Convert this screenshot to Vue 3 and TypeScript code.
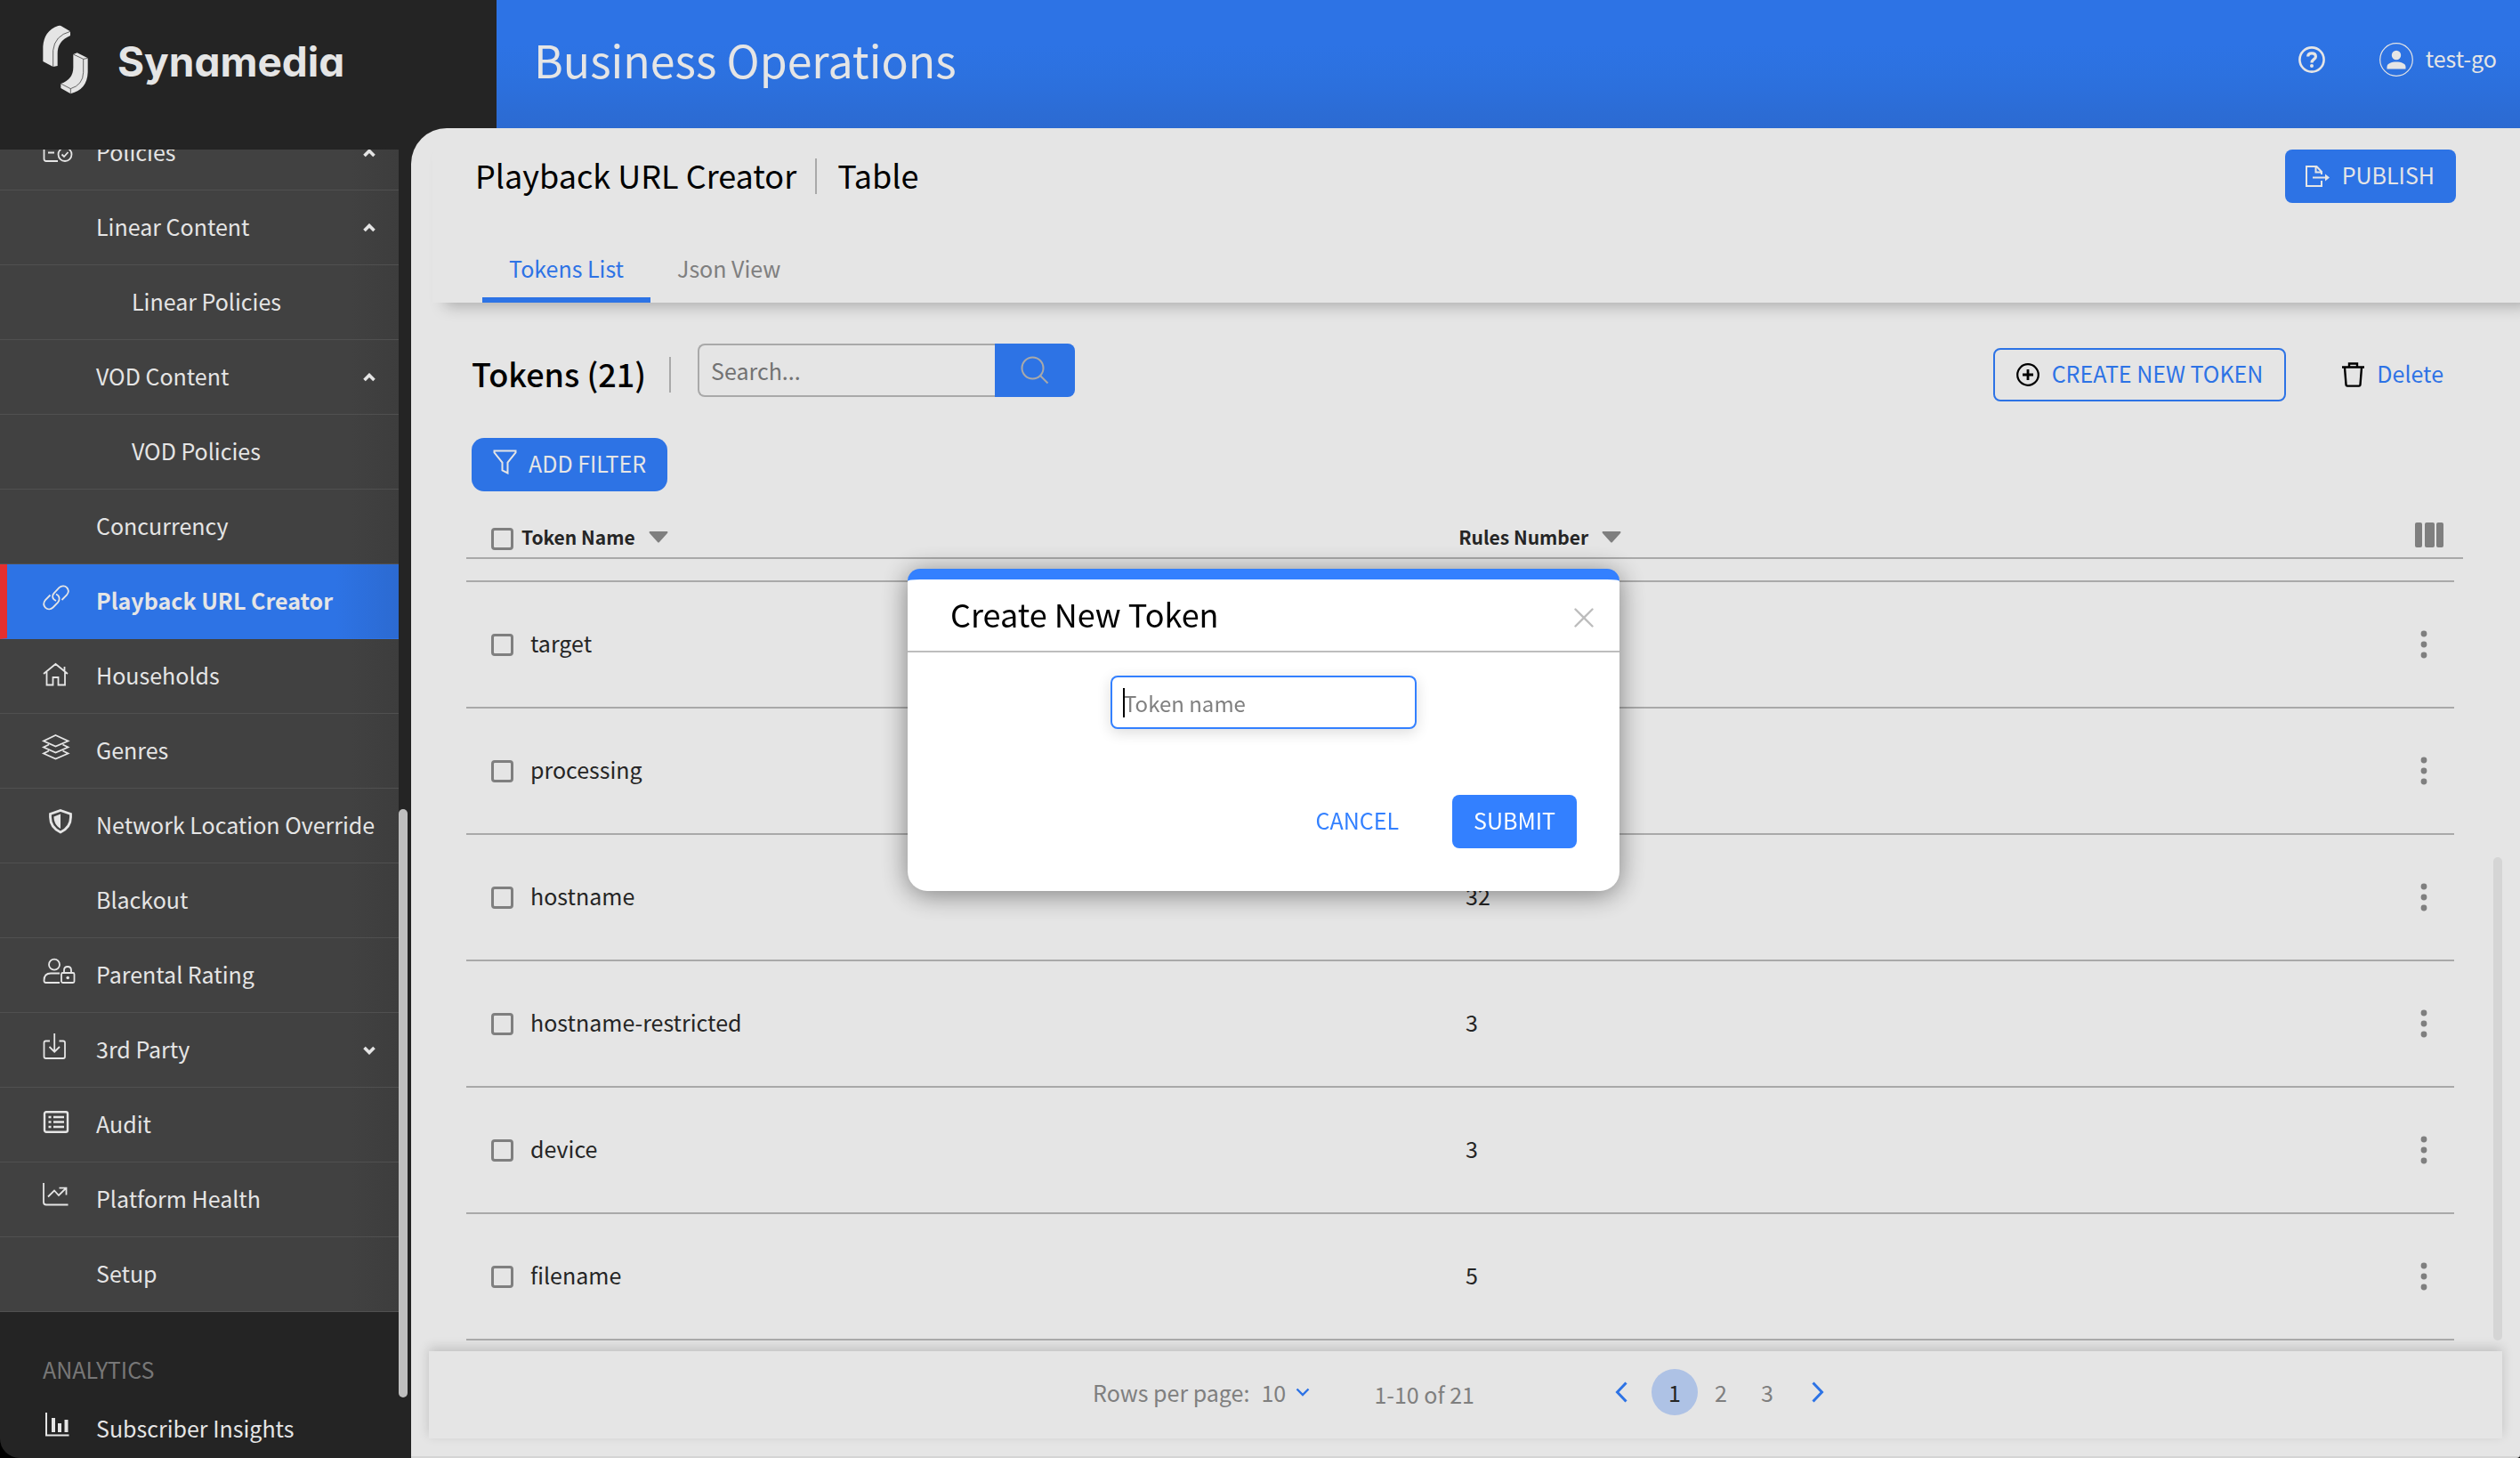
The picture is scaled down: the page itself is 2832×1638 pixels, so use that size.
<script setup lang="ts">
import { onMounted, ref } from 'vue'

interface NavItem {
  label: string
  icon?: string
  sub?: boolean
  chevron?: 'up' | 'down'
  active?: boolean
}

interface TokenRow {
  name: string
  rules: number
}

const navItems: NavItem[] = [
  { label: 'Policies', icon: 'policies', chevron: 'up' },
  { label: 'Linear Content', chevron: 'up' },
  { label: 'Linear Policies', sub: true },
  { label: 'VOD Content', chevron: 'up' },
  { label: 'VOD Policies', sub: true },
  { label: 'Concurrency' },
  { label: 'Playback URL Creator', icon: 'link', active: true },
  { label: 'Households', icon: 'home' },
  { label: 'Genres', icon: 'layers' },
  { label: 'Network Location Override', icon: 'shield' },
  { label: 'Blackout' },
  { label: 'Parental Rating', icon: 'parental' },
  { label: '3rd Party', icon: 'import', chevron: 'down' },
  { label: 'Audit', icon: 'audit' },
  { label: 'Platform Health', icon: 'trend' },
  { label: 'Setup' },
]

const rows: TokenRow[] = [
  { name: 'target', rules: 4 },
  { name: 'processing', rules: 2 },
  { name: 'hostname', rules: 32 },
  { name: 'hostname-restricted', rules: 3 },
  { name: 'device', rules: 3 },
  { name: 'filename', rules: 5 },
]

const pages = [1, 2, 3]
const page = ref(1)
const search = ref('')
const tokenName = ref('')
const perPage = ref('10')
const menu = ref<HTMLElement | null>(null)

onMounted(() => {
  if (menu.value) menu.value.scrollTop = 38
})
</script>

<template>
  <div class="app">
    <header class="top">
      <div class="brand">
        <svg class="logo" viewBox="36 22 156 234" aria-hidden="true">
          <path class="solid" d="M37 145V95Q40 42 88 25Q95 22 101 27L129 44V58Q86 76 86 118V160L71 163Z" />
          <path class="seam" d="M71 163V108Q76 58 129 44" />
          <path class="solid" d="M139 121L152 116L188 134V182Q186 240 130 254L97 235V220Q139 205 139 165Z" />
          <path class="seam" d="M139 121L173 137L188 134M173 137V182Q172 224 130 237L97 220M130 237V254" />
        </svg>
        <span class="brand-name">Synamedia</span>
      </div>
      <div class="topbar">
        <h1>Business Operations</h1>
        <button class="plain help" aria-label="Help">
          <svg width="30" height="30" viewBox="0 0 30 30" fill="none">
            <circle cx="15" cy="15" r="13.6" stroke="#fff" stroke-width="2.6" />
            <path d="M10.6 11.5C10.8 8.9 12.6 7.9 15 7.9C17.7 7.9 19.4 9.4 19.4 11.7C19.4 14.8 15 14.6 15 18.4" stroke="#fff" stroke-width="3.2" />
            <circle cx="15" cy="22" r="2" fill="#fff" />
          </svg>
        </button>
        <button class="plain user">
          <svg width="38" height="38" viewBox="0 0 38 38" fill="none">
            <circle cx="19" cy="19" r="18.3" stroke="#fff" stroke-width="1.2" />
            <circle cx="19" cy="14" r="5.2" fill="#fff" />
            <path d="M8.5 29.5V27C8.5 23.5 13.5 21.6 19 21.6S29.5 23.5 29.5 27V29.5Z" fill="#fff" />
          </svg>
          <span class="txt">test-go</span>
        </button>
      </div>
    </header>

    <div class="body">
      <aside class="side">
        <nav ref="menu" class="menu">
          <a v-for="item in navItems" :key="item.label" href="#" class="item" :class="{ active: item.active, sub: item.sub }">
            <svg class="nav-icon" viewBox="0 0 37 30" aria-hidden="true">
              <g v-if="item.icon === 'policies'">
                <path d="M17 28H4Q1.500 28 1.500 25.500V6Q1.500 3.500 4 3.500H23Q25.500 3.500 25.500 6V10M6 18.500H13M6 11H18" />
                <circle cx="25" cy="20.500" r="7.500" />
                <path d="M21.500 20.500L24 23L28.500 18" />
              </g>
              <g v-else-if="item.icon === 'link'">
                <path d="M15 18C10.500 16 10 12 13 9L18.500 3.200C21 .8 25 .6 27 3C29.500 5.500 29 9 27 11.500L21.500 17" />
                <path d="M8.500 11.500L3 17C.8 20 1 23.500 3 25.700C5.500 28 9 28 11.500 25.500L17 20C19.500 17 19.500 12.500 15 10.500" />
              </g>
              <path v-else-if="item.icon === 'home'" d="M1 16L14.500 5L28 16M4.500 14V28.500H11.500V20H17.500V28.500H25V14M24.500 8V13" />
              <path v-else-if="item.icon === 'layers'" d="M14.500 1L28.500 7.500L14.500 13.500L1 7.500ZM7 11.500L1 14.500L14.500 20.500L28.500 14.500L22.500 11.500M7 18.500L1 21.500L14.500 27.500L28.500 21.500L22.500 18.500" />
              <g v-else-if="item.icon === 'shield'">
                <path stroke-width="2.800" d="M20 1.500L31.500 5.500V9C31.500 17 27.500 22.500 20 26C12.500 22.500 8.500 17 8.500 9V5.500Z" />
                <path class="fill" d="M20 5.500L12.500 8.500C12.500 14.500 15 19 20 22Z" />
              </g>
              <g v-else-if="item.icon === 'parental'">
                <circle cx="13" cy="6.700" r="6" />
                <path d="M19 27H3.500Q1.500 27 1.500 24.500C1.500 19 4.500 16.500 9 16.500H19" />
                <rect x="21" y="16" width="14.500" height="11" rx="1.500" />
                <path d="M24 16V13Q24 9 28 9T32 13V16" />
                <circle class="fill" cx="28.200" cy="21.500" r="1.800" />
              </g>
              <path v-else-if="item.icon === 'import'" d="M8 8.500H3.500Q1.500 8.500 1.500 10.500V26Q1.500 28 3.500 28H23Q25 28 25 26V10.500Q25 8.500 23 8.500H18.500M13.200 0V20.500M7.500 15L13.200 20.700L19 15" />
              <g v-else-if="item.icon === 'audit'" stroke-width="2.400">
                <rect x="2" y="4.200" width="26" height="22.500" rx="2" />
                <path d="M12 10H24M12 15.500H24M12 21H24M6.500 10H9.500M6.500 15.500H9.500M6.500 21H9.500" />
              </g>
              <path v-else-if="item.icon === 'trend'" d="M1 0V21.500Q1 24.500 4 24.500H28.500M6 15.500L13 8.500L18 14L26 6M18.500 5.700H26.500V13.500" />
            </svg>
            <span class="label">{{ item.label }}</span>
            <svg v-if="item.chevron" class="chev" :class="item.chevron" width="14" height="10" viewBox="0 0 14 10" aria-hidden="true">
              <path d="M1.500 8L7 2.500L12.500 8" />
            </svg>
          </a>
          <h2 class="group">ANALYTICS</h2>
          <a href="#" class="item dark">
            <svg class="nav-icon" viewBox="0 0 37 30" aria-hidden="true">
              <path stroke-width="2" d="M4 0V25.500H29.500" />
              <path stroke-width="4" d="M12 6V22M19 12V22M26.500 8V22" />
            </svg>
            <span class="label">Subscriber Insights</span>
          </a>
        </nav>
        <div class="rail"><div class="thumb"></div></div>
      </aside>

      <main class="main">
        <section class="page-head">
          <div class="title-row">
            <div class="crumbs">
              <span class="txt">Playback URL Creator</span>
              <i class="bar"></i>
              <span class="txt">Table</span>
            </div>
            <button class="btn solid-btn publish">
              <svg width="29" height="26" viewBox="0 0 29 26" fill="none" stroke="#fff" stroke-width="2">
                <path d="M19 18V24H2V2H13.500L19 8V11M12.500 2V8.500H19M9 14.500H24" />
                <path d="M23 10.500L28 14.500L23 18.500Z" fill="#fff" stroke="none" />
              </svg>
              <span class="txt">PUBLISH</span>
            </button>
          </div>
          <div class="tabs" role="tablist">
            <button class="tab on" role="tab" aria-selected="true">Tokens List</button>
            <button class="tab" role="tab" aria-selected="false">Json View</button>
          </div>
        </section>

        <section class="tools">
          <h2 class="count">Tokens (21)</h2>
          <i class="bar tool-bar"></i>
          <form class="search" @submit.prevent>
            <input v-model="search" type="text" placeholder="Search..." aria-label="Search tokens" />
            <button type="submit" aria-label="Search">
              <svg width="32" height="32" viewBox="0 0 32 32" fill="none" stroke="#bdbdbd" stroke-width="2">
                <circle cx="13.500" cy="13.500" r="12" />
                <path d="M22 22L30.500 30.500" />
              </svg>
            </button>
          </form>
          <div class="actions">
            <button class="btn outline">
              <svg width="26" height="26" viewBox="0 0 26 26" fill="none" stroke="#000">
                <circle cx="13" cy="13" r="11.800" stroke-width="2.200" />
                <path d="M13 7V19M7 13H19" stroke-width="2.800" />
              </svg>
              <span class="txt">CREATE NEW TOKEN</span>
            </button>
            <button class="plain delete">
              <svg width="25" height="28" viewBox="0 0 25 28" fill="none" stroke="#000" stroke-width="2.400">
                <path d="M0 5.500H25M8 5V1.500H17V5M3 6L4.500 25Q4.600 26.600 6 26.600H19Q20.400 26.600 20.500 25L22 6" />
              </svg>
              <span class="txt">Delete</span>
            </button>
          </div>
        </section>

        <button class="btn solid-btn filter">
          <svg width="27" height="28" viewBox="0 0 27 28" fill="none" stroke="#fff" stroke-width="2">
            <path d="M1.500 1.500H25.500V3.500L16.500 14.500V26.500L10.500 23.500V14.500L1.500 3.500Z" />
          </svg>
          <span class="txt">ADD FILTER</span>
        </button>

        <div class="table-area">
          <table>
            <thead>
              <tr>
                <th class="c-name">
                  <input type="checkbox" aria-label="Select all tokens" />
                  <span>Token Name</span>
                  <svg width="22" height="13" viewBox="0 0 22 13"><path d="M1 0H21Q22 1 21 2L12 12Q11 13 10 12L1 2Q0 1 1 0Z" fill="#8e8e8e" /></svg>
                </th>
                <th class="c-rules">
                  <span>Rules Number</span>
                  <svg width="22" height="13" viewBox="0 0 22 13"><path d="M1 0H21Q22 1 21 2L12 12Q11 13 10 12L1 2Q0 1 1 0Z" fill="#8e8e8e" /></svg>
                </th>
                <th class="c-act">
                  <button class="plain" aria-label="Choose columns">
                    <svg width="32" height="28" viewBox="0 0 32 28" fill="#8e8e8e">
                      <rect width="8" height="28" rx="2" />
                      <rect x="11" width="11" height="28" rx="2" />
                      <rect x="24" width="8" height="28" rx="2" />
                    </svg>
                  </button>
                </th>
              </tr>
            </thead>
            <tbody>
              <tr class="cut" aria-hidden="true"><td></td></tr>
              <tr v-for="row in rows" :key="row.name">
                <td class="c-name">
                  <input :id="'t-' + row.name" type="checkbox" />
                  <label class="txt" :for="'t-' + row.name">{{ row.name }}</label>
                </td>
                <td class="c-rules"><span class="txt">{{ row.rules }}</span></td>
                <td class="c-act">
                  <button class="plain" :aria-label="'Actions for ' + row.name">
                    <svg width="8" height="32" viewBox="0 0 8 32" fill="#8e8e8e">
                      <circle cx="4" cy="4" r="3.400" />
                      <circle cx="4" cy="16" r="3.400" />
                      <circle cx="4" cy="28" r="3.400" />
                    </svg>
                  </button>
                </td>
              </tr>
            </tbody>
          </table>
          <div class="table-thumb"></div>
        </div>

        <footer class="pager">
          <label for="per-page">Rows per page:</label>
          <span class="per">
            <select id="per-page" v-model="perPage">
              <option>10</option>
              <option>20</option>
            </select>
            <svg width="16" height="10" viewBox="0 0 16 10" fill="none" stroke="#3380ff" stroke-width="2.400"><path d="M1.500 1.500L8 8L14.500 1.500" /></svg>
          </span>
          <span class="range">1-10 of 21</span>
          <button class="plain" aria-label="Previous page">
            <svg width="14" height="24" viewBox="0 0 14 24" fill="none" stroke="#3380ff" stroke-width="3"><path d="M12.500 1.500L2.500 12L12.500 22.500" /></svg>
          </button>
          <div class="pages">
            <button v-for="n in pages" :key="n" class="plain num" :class="{ on: n === page }" @click="page = n">{{ n }}</button>
          </div>
          <button class="plain" aria-label="Next page">
            <svg width="14" height="24" viewBox="0 0 14 24" fill="none" stroke="#3380ff" stroke-width="3"><path d="M1.500 1.500L11.500 12L1.500 22.500" /></svg>
          </button>
        </footer>
      </main>
    </div>

    <div class="overlay">
      <form class="dialog" role="dialog" aria-labelledby="dialog-title" @submit.prevent>
        <div class="dialog-head">
          <h2 id="dialog-title">Create New Token</h2>
          <button type="button" class="plain" aria-label="Close">
            <svg width="22" height="22" viewBox="0 0 22 22" fill="none" stroke="#bdbdbd" stroke-width="2.400" stroke-linecap="round"><path d="M1.500 1.500L20.500 20.500M20.500 1.500L1.500 20.500" /></svg>
          </button>
        </div>
        <div class="field">
          <input v-model="tokenName" type="text" placeholder="Token name" aria-label="Token name" />
          <i class="caret"></i>
        </div>
        <div class="dialog-foot">
          <button type="button" class="plain cancel"><span class="txt">CANCEL</span></button>
          <button type="submit" class="btn submit"><span class="txt">SUBMIT</span></button>
        </div>
      </form>
    </div>
  </div>
</template>

<style>
html,
body {
  margin: 0;
  background: #000;
}
</style>

<style scoped>
.app {
  display: flex;
  flex-direction: column;
  height: 100vh;
  overflow: hidden;
  border-radius: 0 0 4px 22px;
  background: #292929;
  color: #000;
  font-family: "Noto Sans CJK SC", "Noto Sans", sans-serif;
  font-size: 25px;
  line-height: 36px;
}
*,
*::before,
*::after {
  box-sizing: border-box;
}
h1,
h2 {
  margin: 0;
  font-weight: 400;
}
svg {
  display: block;
  flex: none;
}
button,
input,
select {
  font: inherit;
  color: inherit;
  margin: 0;
}
button {
  cursor: pointer;
}
.plain {
  display: flex;
  align-items: center;
  padding: 0;
  border: 0;
  background: none;
}
/* The face sits low in its line box; lift it to the optical centre. */
.txt {
  padding-bottom: 4px;
}

/* top bar */
.top {
  display: flex;
  height: 144px;
  flex: none;
}
.brand {
  display: flex;
  align-items: center;
  width: 558px;
  padding: 0 0 10px 48px;
  color: #fff;
}
.logo {
  width: 52px;
  height: 78px;
}
.logo .solid {
  fill: #fff;
}
.logo .seam {
  fill: none;
  stroke: #292929;
  stroke-width: 2;
}
.brand-name {
  margin-left: 32px;
  padding-top: 4px;
  font-family: Inter, sans-serif;
  font-feature-settings: "cv11";
  font-weight: 700;
  font-size: 46px;
  line-height: 60px;
}
.topbar {
  flex: 1;
  display: flex;
  align-items: center;
  padding: 0 26px 10px 42px;
  color: #fff;
  background: linear-gradient(#3380ff 35%, #327ef9 60%, #3277e9);
}
.topbar h1 {
  flex: 1;
  padding-bottom: 2px;
  font-size: 50px;
  line-height: 72px;
}
.user {
  margin-left: 61px;
  gap: 14px;
}

.body {
  flex: 1;
  display: flex;
  min-height: 0;
}

/* side menu */
.side {
  display: flex;
  width: 462px;
  flex: none;
  padding-top: 24px;
}
.menu {
  width: 448px;
  overflow-y: scroll;
  scrollbar-width: none;
}
.item {
  display: flex;
  align-items: center;
  height: 84px;
  padding: 0 26px 0 48px;
  border-bottom: 1px solid #5a5a5a;
  background: linear-gradient(90deg, #494949 88%, #454545);
  color: #fff;
  text-decoration: none;
  white-space: nowrap;
}
.item .label {
  flex: 1;
  margin-left: 23px;
  padding-bottom: 4px;
}
.item.sub .label {
  margin-left: 63px;
}
.item.active {
  padding-left: 40px;
  border-left: 8px solid #ff3535;
  border-bottom-color: #3380ff;
  background: linear-gradient(90deg, #3380ff 84%, #3277e9);
  font-weight: 700;
}
.item.dark {
  background: none;
  border-color: transparent;
}
.nav-icon {
  width: 37px;
  height: 30px;
  margin-bottom: 8px;
  overflow: visible;
  fill: none;
  stroke: #fff;
  stroke-width: 1.8;
}
.nav-icon .fill {
  fill: #fff;
  stroke: none;
}
.chev {
  fill: none;
  stroke: #fff;
  stroke-width: 3.6;
}
.chev.down {
  transform: rotate(180deg);
}
.group {
  height: 90px;
  padding: 46px 0 0 48px;
  font-size: 25px;
  color: #858585;
}
.rail {
  position: relative;
  width: 10px;
}
.thumb {
  position: absolute;
  top: 50.4%;
  width: 10px;
  height: 45%;
  border-radius: 5px;
  background: #d5d5d5;
}

/* page */
.main {
  flex: 1;
  display: flex;
  flex-direction: column;
  min-width: 0;
  border-top-left-radius: 40px;
  border-bottom: 2px solid #ededed;
  background: #fff;
}
.page-head {
  display: flex;
  flex-direction: column;
  margin: 0 -24px 0 24px;
  padding: 24px 96px 0 48px;
  box-shadow: 0 18px 16px -14px rgba(0, 0, 0, 0.25);
}
.title-row {
  display: flex;
  justify-content: space-between;
}
.crumbs {
  display: flex;
  align-items: center;
  font-size: 36px;
  line-height: 52px;
}
.bar {
  width: 2px;
  height: 40px;
  background: #bdbdbd;
}
.crumbs .bar {
  margin: 0 23px 0 21px;
}
.btn {
  display: flex;
  align-items: center;
  height: 60px;
  border: 0;
  border-radius: 8px;
  white-space: nowrap;
}
.solid-btn {
  background: #3380ff;
  color: #fff;
}
.publish {
  gap: 13px;
  padding: 0 24px 0 22px;
}
.tabs {
  display: flex;
  margin: 38px 0 0 8px;
}
.tab {
  height: 74px;
  padding: 2px 30px 0;
  border: 0;
  border-bottom: 6px solid transparent;
  background: none;
  color: #8e8e8e;
}
.tab.on {
  border-color: #3380ff;
  color: #3380ff;
}
.tools {
  display: flex;
  align-items: flex-end;
  height: 111px;
  padding: 46px 86px 0 68px;
}
.count {
  padding-bottom: 2px;
  font-size: 36px;
  line-height: 60px;
  font-weight: 500;
}
.tool-bar {
  margin: 0 30px 10px 26px;
}
.search {
  display: flex;
  align-self: flex-start;
  width: 424px;
  height: 60px;
}
.search input {
  flex: 1;
  min-width: 0;
  padding: 0 13px;
  border: 2px solid #bdbdbd;
  border-right: 0;
  border-radius: 8px 0 0 8px;
  background: #fff;
}
.search input::placeholder {
  color: #808080;
  opacity: 1;
}
.search button {
  display: flex;
  align-items: center;
  justify-content: center;
  width: 90px;
  border: 0;
  border-radius: 0 8px 8px 0;
  background: #3380ff;
}
.actions {
  display: flex;
  margin-left: auto;
  gap: 63px;
}
.outline {
  gap: 14px;
  padding: 0 24px;
  border: 2px solid #3380ff;
  background: none;
  color: #3380ff;
}
.delete {
  gap: 14px;
  color: #3380ff;
}
.filter {
  align-self: flex-start;
  margin: 41px 0 0 68px;
  padding: 0 24px;
  gap: 13px;
  border-radius: 14px;
}
.filter svg {
  margin-bottom: 6px;
}

/* table */
.table-area {
  position: relative;
  margin: 28px 20px 0 62px;
}
table,
thead,
tbody {
  display: block;
}
table {
  margin-right: 44px;
}
tbody {
  margin-right: 10px;
}
tr {
  display: flex;
  align-items: center;
  height: 142px;
  border-bottom: 2px solid #bdbdbd;
}
thead tr {
  height: 48px;
  font-size: 21px;
  line-height: 30px;
  color: #2a2a2a;
}
tr.cut {
  height: 26px;
}
th,
td {
  display: flex;
  align-items: center;
  padding: 0;
  text-align: left;
}
td {
  color: #2a2a2a;
}
.c-name {
  flex: 0 0 50%;
  padding-left: 28px;
}
thead .c-name {
  flex-basis: 49.7%;
}
thead .c-name input {
  margin-top: 4px;
}
thead .c-name span {
  margin-left: 9px;
}
thead svg {
  margin-left: 15px;
}
thead .c-act svg {
  margin: 0;
}
.c-name label {
  margin-left: 19px;
}
.c-rules {
  flex: 1;
}
td.c-rules {
  padding-left: 6px;
}
td.c-act {
  padding-right: 30px;
}
th.c-act {
  padding: 0 22px 4px 0;
}
input[type="checkbox"] {
  appearance: none;
  width: 25px;
  height: 25px;
  flex: none;
  border: 3px solid #8e8e8e;
  border-radius: 4px;
}
.table-thumb {
  position: absolute;
  right: 0;
  bottom: 0;
  width: 10px;
  height: 543px;
  border-radius: 5px;
  background: #eee;
}

/* pager */
.pager {
  display: flex;
  align-items: center;
  justify-content: center;
  height: 98px;
  margin: 12px 20px 0 20px;
  padding: 0 16px 6px 0;
  background: #fff;
  box-shadow: 0 -4px 12px rgba(0, 0, 0, 0.16);
  color: #8e8e8e;
}
.per {
  position: relative;
  display: flex;
  align-items: center;
  margin-left: 13px;
}
.per select {
  appearance: none;
  width: 56px;
  padding: 0;
  border: 0;
  background: none;
}
.per svg {
  position: absolute;
  right: 1px;
  pointer-events: none;
}
.range {
  margin: 4px 158px 0 71px;
}
.pages {
  display: flex;
  margin: 0 24px 0 27px;
}
.num {
  justify-content: center;
  width: 52px;
  height: 52px;
  border-radius: 50%;
}
.num.on {
  background: #c2d8ff;
  color: #2a2a2a;
}

/* dialog */
.overlay {
  position: fixed;
  inset: 0;
  display: flex;
  align-items: center;
  justify-content: center;
  padding: 2px 0 0 8px;
  border-radius: 0 0 4px 22px;
  background: rgba(0, 0, 0, 0.1);
}
.dialog {
  width: 800px;
  border-radius: 14px 14px 22px 22px;
  overflow: hidden;
  border-top: 12px solid #3380ff;
  background: #fff;
  box-shadow: 0 4px 30px rgba(0, 0, 0, 0.45);
}
.dialog-head {
  display: flex;
  align-items: center;
  justify-content: space-between;
  height: 82px;
  padding: 0 29px 0 48px;
  border-bottom: 2px solid #bdbdbd;
}
.dialog-head h2 {
  padding-bottom: 4px;
  font-size: 36px;
  line-height: 52px;
}
.dialog-head button {
  margin-top: 6px;
}
.field {
  position: relative;
  width: 344px;
  margin: 26px auto 0;
}
.field input {
  display: block;
  width: 100%;
  height: 60px;
  padding: 0 13px;
  border: 2px solid #3380ff;
  border-radius: 8px;
  outline: 0;
  box-shadow: 0 4px 16px rgba(0, 0, 0, 0.14);
  font-size: 24px;
}
.field input::placeholder {
  color: #808080;
  opacity: 1;
}
.caret {
  position: absolute;
  left: 14px;
  top: 14px;
  width: 2px;
  height: 33px;
  background: #000;
}
.dialog-foot {
  display: flex;
  align-items: center;
  justify-content: flex-end;
  gap: 60px;
  margin: 74px 48px 48px;
}
.cancel {
  color: #3380ff;
}
.submit {
  padding: 0 24px;
  background: #3380ff;
  color: #fff;
}
</style>
